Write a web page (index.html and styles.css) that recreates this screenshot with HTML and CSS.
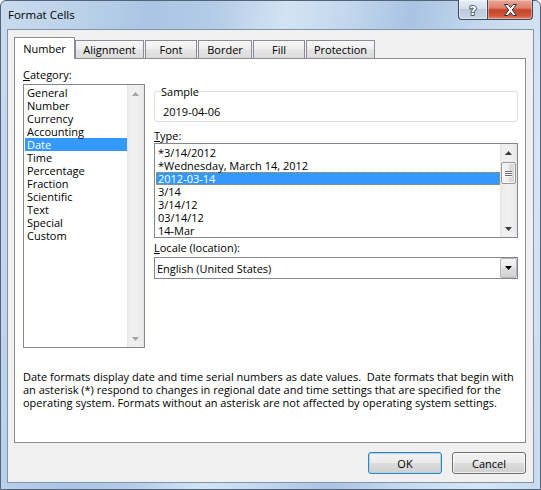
FILE: index.html
```html
<!DOCTYPE html>
<html lang="en">
<head>
<meta charset="utf-8">
<title>Format Cells</title>
<link rel="stylesheet" href="styles.css">
</head>
<body>
<div class="window">
  <div class="titlebar">
    <span class="title">Format Cells</span>
    <div class="caption-btns">
      <div class="cbtn help">
        <svg width="14" height="14" viewBox="0 0 14 14"><text x="7" y="12" text-anchor="middle" class="q">?</text></svg>
      </div>
      <div class="cbtn close">
        <svg width="15" height="12" viewBox="0 0 15 12"><path d="M1.5 0.5 H5 L7.5 3.6 L10 0.5 H13.5 L9.3 6 L13.5 11.5 H10 L7.5 8.4 L5 11.5 H1.5 L5.7 6 Z" fill="#fff" stroke="#2b3645" stroke-width="1" stroke-linejoin="round"/></svg>
      </div>
    </div>
  </div>
  <div class="client">
    <div class="tabs">
      <div class="tab active">Number</div>
      <div class="tab t-align">Alignment</div>
      <div class="tab t-font">Font</div>
      <div class="tab t-border">Border</div>
      <div class="tab t-fill">Fill</div>
      <div class="tab t-prot">Protection</div>
    </div>
    <div class="panel">
      <div class="cols">
        <div class="col-left">
          <div class="label"><u>C</u>ategory:</div>
          <div class="listbox cat-list">
            <div class="items">
              <div class="item">General</div>
              <div class="item">Number</div>
              <div class="item">Currency</div>
              <div class="item">Accounting</div>
              <div class="item sel">Date</div>
              <div class="item">Time</div>
              <div class="item">Percentage</div>
              <div class="item">Fraction</div>
              <div class="item">Scientific</div>
              <div class="item">Text</div>
              <div class="item">Special</div>
              <div class="item">Custom</div>
            </div>
            <div class="vscroll disabled">
              <div class="arrow-btn"><svg width="7" height="4" viewBox="0 0 7 4"><path d="M0 4 L3.5 0 L7 4 Z"/></svg></div>
              <div class="arrow-btn"><svg width="7" height="4" viewBox="0 0 7 4"><path d="M0 0 L3.5 4 L7 0 Z"/></svg></div>
            </div>
          </div>
        </div>
        <div class="col-right">
          <fieldset class="sample">
            <legend>Sample</legend>
            <div class="sample-value">2019-04-06</div>
          </fieldset>
          <div class="label type-label"><u>T</u>ype:</div>
          <div class="listbox type-list">
            <div class="items">
              <div class="item">*3/14/2012</div>
              <div class="item">*Wednesday, March 14, 2012</div>
              <div class="item sel focus">2012-03-14</div>
              <div class="item">3/14</div>
              <div class="item">3/14/12</div>
              <div class="item">03/14/12</div>
              <div class="item">14-Mar</div>
            </div>
            <div class="vscroll">
              <div class="arrow-btn"><svg width="7" height="4" viewBox="0 0 7 4"><path d="M0 4 L3.5 0 L7 4 Z"/></svg></div>
              <div class="thumb"><span></span><span></span><span></span></div>
              <div class="track-fill"></div>
              <div class="arrow-btn"><svg width="7" height="4" viewBox="0 0 7 4"><path d="M0 0 L3.5 4 L7 0 Z"/></svg></div>
            </div>
          </div>
          <div class="label locale-label"><u>L</u>ocale (location):</div>
          <div class="combo">
            <span class="combo-text">English (United States)</span>
            <div class="drop-btn"><svg width="7" height="4" viewBox="0 0 7 4"><path d="M0 0 L3.5 4 L7 0 Z"/></svg></div>
          </div>
        </div>
      </div>
      <p class="desc">Date formats display date and time serial numbers as date values.&nbsp; Date formats that begin with<br>an asterisk (*) respond to changes in regional date and time settings that are specified for the<br>operating system. Formats without an asterisk are not affected by operating system settings.</p>
    </div>
    <div class="buttons">
      <button class="btn default">OK</button>
      <button class="btn">Cancel</button>
    </div>
  </div>
</div>
</body>
</html>
```

FILE: styles.css
```css
* { box-sizing: border-box; }
html, body { margin: 0; padding: 0; }
body {
  width: 541px;
  height: 490px;
  overflow: hidden;
  background: #ffffff;
  font-family: "Open Sans", "Noto Sans", sans-serif;
  font-size: 11px;
  line-height: 13px;
  color: #000;
}

.window {
  width: 541px;
  height: 490px;
  border: 1px solid #52647a;
  border-radius: 6px 6px 0 0;
  padding: 0 6px 6px;
  display: flex;
  flex-direction: column;
  background:
    linear-gradient(100deg,
      #c9dbee 0%, #bcd2ea 12%, #aac5e3 24%, #b3cbe7 34%,
      #d3e3f3 46%, #c2d7ed 56%, #a9c3e2 66%, #c6d9ee 78%, #d7e6f5 90%, #c8daee 100%);
}

/* title bar */
.titlebar {
  height: 28px;
  margin: 0 -6px;
  padding-left: 7px;
  padding-right: 7px;
  display: flex;
  align-items: flex-start;
  justify-content: space-between;
}
.title {
  margin-top: 7px;
  font-size: 11.5px;
  color: #000;
}
.caption-btns {
  display: flex;
  margin-top: -1px;
}
.cbtn {
  height: 20px;
  display: flex;
  align-items: center;
  justify-content: center;
  border: 1px solid #3d4b5e;
  border-top: none;
}
.help {
  width: 29px;
  border-right: none;
  border-radius: 0 0 0 4px;
  background: linear-gradient(#e8eef6 0%, #d3deea 45%, #bccbdc 50%, #c8d6e6 100%);
  box-shadow: inset 0 0 0 1px rgba(255,255,255,0.45);
}
.close {
  width: 46px;
  border-radius: 0 0 4px 0;
  background: linear-gradient(#e9a896 0%, #dc806a 42%, #c8432a 52%, #cf5337 80%, #e3866a 100%);
  box-shadow: inset 0 0 0 1px rgba(255,220,210,0.45);
}
.q {
  font-family: "DejaVu Sans", sans-serif;
  font-size: 13px;
  font-weight: bold;
  fill: #ffffff;
  stroke: #3b4758;
  stroke-width: 1.6px;
  paint-order: stroke;
}

/* client area */
.client {
  height: 454px;
  border: 1px solid #8093aa;
  background: #f0f0f0;
  padding: 7px 7px 0 6px;
  display: flex;
  flex-direction: column;
}

/* tabs */
.tabs {
  display: flex;
  align-items: flex-end;
  height: 21px;
}
.tab {
  height: 18px;
  border: 1px solid #898c95;
  border-bottom: none;
  background: linear-gradient(#f7f7f7 0%, #efefef 45%, #e5e5e5 50%, #dcdcdc 100%);
  text-align: center;
  padding-top: 2px;
  margin-left: 1px;
}
.tab.active {
  width: 61px;
  height: 22px;
  margin-left: 0;
  margin-bottom: -1px;
  position: relative;
  z-index: 1;
  background: #ffffff;
  padding-top: 4px;
}
.t-align { width: 69px; margin-left: 0; }
.t-font { width: 52px; }
.t-border { width: 54px; }
.t-fill { width: 52px; }
.t-prot { width: 69px; }

.panel {
  height: 385px;
  border: 1px solid #898c95;
  background: #ffffff;
  padding: 0 8px;
}
.cols {
  display: grid;
  grid-template-columns: 122px 364px;
  column-gap: 9px;
  align-items: start;
}
.col-left { padding-top: 9px; }
.label { height: 13px; white-space: nowrap; }

.listbox {
  border: 1px solid #828790;
  background: #fff;
  display: flex;
  overflow: hidden;
}
.cat-list { height: 264px; margin-top: 3px; }
.type-list { height: 95px; margin-top: 1px; }
.items {
  flex: 1;
  min-width: 0;
  padding: 1px 0 0 1px;
  overflow: hidden;
}
.type-list .items { padding-top: 2px; }
.item {
  height: 13px;
  padding-left: 2px;
  white-space: nowrap;
}
.item.sel { background: #3399ff; color: #fff; }
.item.focus { border: 1px dotted #d8883a; padding-left: 1px; line-height: 11px; }

.vscroll {
  width: 17px;
  flex: none;
  display: flex;
  flex-direction: column;
  background: linear-gradient(to right, #e3e3e3 0px, #eeeeee 2px, #f0f0f0 9px, #ececec 15px, #e3e3e3 17px);
}
.vscroll.disabled { justify-content: space-between; }
.arrow-btn {
  height: 17px;
  display: flex;
  align-items: center;
  justify-content: center;
}
.arrow-btn svg { fill: #3c3c3c; }
.vscroll.disabled .arrow-btn svg { fill: #a3a3a3; }
.thumb {
  height: 22px;
  margin: 1px 1px 0;
  border: 1px solid #979797;
  border-radius: 2px;
  background: linear-gradient(to right, #f5f5f5 0%, #ececec 50%, #dcdcdc 51%, #d6d6d6 100%);
  box-shadow: inset 0 0 0 1px rgba(255,255,255,0.7);
  display: flex;
  flex-direction: column;
  align-items: center;
  justify-content: center;
  gap: 1px;
}
.thumb span {
  width: 7px;
  height: 1px;
  background: #6f6f6f;
  box-shadow: 0 1px 0 #fafafa;
}
.track-fill { flex: 1; }

/* sample group */
.sample {
  margin: 26px 0 0;
  padding: 7px 8px 3px;
  border: 1px solid #d5dfe5;
  border-radius: 3px;
  min-width: 0;
}
.sample legend {
  padding: 0 1px;
  margin-left: -3px;
  line-height: 13px;
}
.sample-value { height: 13px; }
.type-label { margin-top: 7px; }
.locale-label { margin-top: 3px; }

.combo {
  margin-top: 3px;
  height: 22px;
  border: 1px solid #828790;
  background: #fff;
  display: flex;
  align-items: center;
  justify-content: space-between;
  padding-left: 2px;
}
.drop-btn {
  width: 17px;
  height: 20px;
  border: 1px solid #b5b5b5;
  border-radius: 2px;
  background: linear-gradient(#f5f5f5 0%, #ececec 45%, #dedede 50%, #d2d2d2 100%);
  display: flex;
  align-items: center;
  justify-content: center;
}
.drop-btn svg { fill: #000; }

.desc {
  margin: 22px 0 0;
  line-height: 13px;
  white-space: nowrap;
}

/* buttons */
.buttons {
  margin-top: 9px;
  display: flex;
  justify-content: flex-end;
  gap: 10px;
}
.btn {
  width: 74px;
  height: 22px;
  padding: 0;
  border: 1px solid #707070;
  border-radius: 3px;
  background: linear-gradient(#f2f2f2 0%, #ebebeb 48%, #dddddd 52%, #cfcfcf 100%);
  box-shadow: inset 0 0 0 1px rgba(255,255,255,0.6);
  font-family: inherit;
  font-size: 11px;
  color: #000;
}
.btn.default {
  border-color: #3c7fb1;
  box-shadow: inset 0 0 0 1px #9fdcf7;
}
```
